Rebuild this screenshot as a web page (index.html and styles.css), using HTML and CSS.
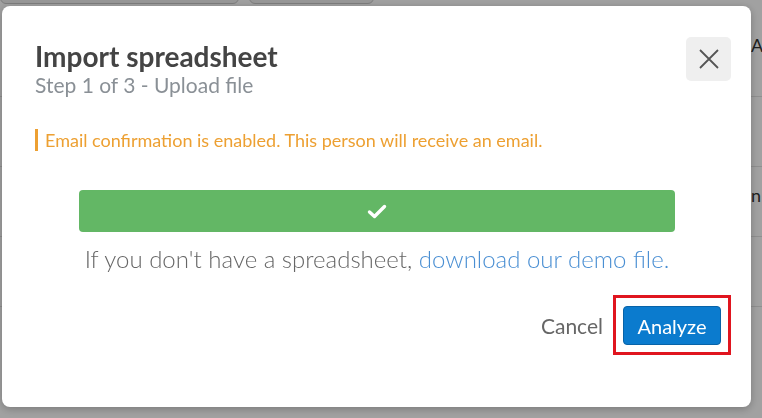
FILE: index.html
```html
<!DOCTYPE html>
<html lang="en">
  <head>
    <meta charset="UTF-8" />
    <meta name="viewport" content="width=device-width, initial-scale=1.0" />
    <title>Import spreadsheet</title>
    <link rel="stylesheet" href="styles.css">
  </head>
  <body>
    <div class="page">
      <div class="tabs">
        <div class="tab"></div>
        <div class="tab tab-small"></div>
      </div>
      <div class="row row-first"><span class="cell-text">A</span></div>
      <div class="row"></div>
      <div class="row"><span class="cell-text cell-low">n</span></div>
      <div class="row"></div>
    </div>

    <div class="overlay">
      <div class="modal">
        <div class="modal-header">
          <div>
            <h1>Import spreadsheet</h1>
            <p class="subtitle">Step 1 of 3 - Upload file</p>
          </div>
          <button class="close-btn" aria-label="Close">
            <svg width="22" height="22" viewBox="0 0 22 22">
              <path d="M2 2 L20 20 M20 2 L2 20" stroke="#555" stroke-width="1.8" fill="none" />
            </svg>
          </button>
        </div>

        <p class="notice">Email confirmation is enabled. This person will receive an email.</p>

        <div class="upload-bar">
          <svg width="20" height="15" viewBox="0 0 20 15">
            <path d="M2.5 8 L7.5 12.5 L17.5 2.5" stroke="#fff" stroke-width="3.4" fill="none" stroke-linecap="round" stroke-linejoin="round" />
          </svg>
        </div>
        <p class="demo-text">If you don't have a spreadsheet, <a href="#">download our demo file.</a></p>

        <div class="modal-footer">
          <a href="#" class="cancel">Cancel</a>
          <span class="highlight">
            <button class="analyze-btn">Analyze</button>
          </span>
        </div>
      </div>
    </div>
  </body>
</html>
```
FILE: styles.css
```css
body {
  margin: 0;
  font-family: Lato, "Open Sans", sans-serif;
  background-color: #ffffff;
  overflow: hidden;
}

/* Page behind the dialog */
.page {
  height: 418px;
}

.tabs {
  display: flex;
  gap: 10px;
  height: 28px;
  margin-top: -24px;
}

.tab {
  width: 237px;
  border: 1px solid #c8c8c8;
  border-radius: 6px;
  background-color: #f0f0f0;
}

.tab-small {
  width: 123px;
}

.row {
  height: 69px;
  border-bottom: 1px solid #e2e2e2;
  padding-left: 751px;
  font-size: 18px;
  color: #333;
}

.row-first {
  height: 92px;
}

.cell-text {
  display: block;
  padding-top: 30px;
}

.cell-low {
  padding-top: 17px;
}

/* Dimmed overlay */
.overlay {
  position: fixed;
  inset: 0;
  background-color: rgba(0, 0, 0, 0.37);
}

.modal {
  position: absolute;
  left: 2px;
  top: 6px;
  width: 749px;
  height: 401px;
  box-sizing: border-box;
  padding: 31px 20px 0 33px;
  background-color: #fff;
  border-radius: 8px;
  box-shadow: 0 2px 8px rgba(0, 0, 0, 0.25);
}

.modal-header {
  display: flex;
  justify-content: space-between;
  align-items: flex-start;
}

.modal-header h1 {
  margin: 3px 0 0;
  font-size: 28px;
  line-height: 32px;
  font-weight: 700;
  color: #444;
}

.subtitle {
  margin: 0;
  font-size: 21px;
  line-height: 25px;
  color: #8a9096;
}

.close-btn {
  width: 45px;
  height: 44px;
  border: none;
  border-radius: 5px;
  background-color: #efefef;
  display: flex;
  align-items: center;
  justify-content: center;
  padding: 0;
}

.notice {
  margin: 32px 0 0 0;
  padding-left: 7px;
  border-left: 3px solid #eda032;
  font-size: 18px;
  line-height: 22px;
  color: #eda032;
}

.upload-bar {
  width: 596px;
  height: 42px;
  margin: 39px 0 0 44px;
  background-color: #63b765;
  border-radius: 4px;
  display: flex;
  align-items: center;
  justify-content: center;
}

.demo-text {
  margin: 13px 0 0 34px;
  width: 616px;
  text-align: center;
  font-size: 24px;
  font-weight: 300;
  line-height: 28px;
  color: #666;
}

.demo-text a {
  color: #4a8fd3;
  text-decoration: none;
}

.modal-footer {
  display: flex;
  justify-content: flex-end;
  align-items: center;
  gap: 10px;
  margin-top: 22px;
}

.cancel {
  font-size: 21px;
  color: #666;
  text-decoration: none;
}

.highlight {
  display: block;
  padding: 8px 7px 7px;
  border: 3px solid #e0151f;
}

.analyze-btn {
  display: block;
  width: 98px;
  height: 39px;
  border: 1px solid #0863a8;
  border-radius: 4px;
  background-color: #0b7bce;
  color: #fff;
  font-family: Lato, sans-serif;
  font-size: 20px;
}
```
